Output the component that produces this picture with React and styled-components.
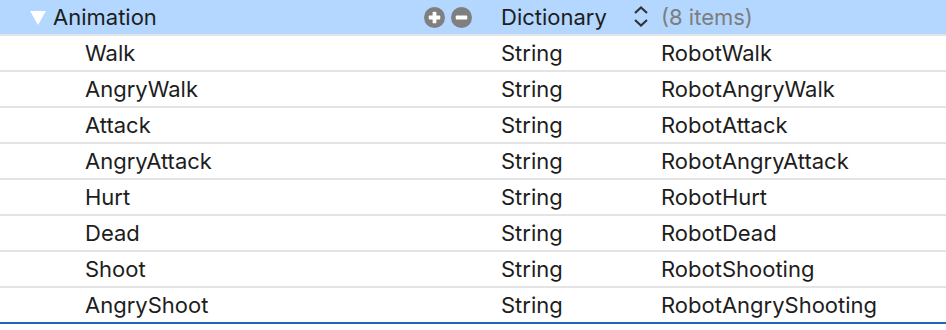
import React from "react";
import styled, { createGlobalStyle } from "styled-components";

const GlobalStyle = createGlobalStyle`
  body {
    margin: 0;
    background: #fff;
    font-family: Inter, "Liberation Sans", sans-serif;
  }
`;

const Table = styled.div`
  width: 946px;
  border-bottom: 2px solid #1f66b5;
`;

const Row = styled.div`
  display: grid;
  grid-template-columns: 501px 160px 1fr;
  height: 34px;
  align-items: center;
  background: ${(p) => (p.$selected ? "#b3d7ff" : "#fff")};
  border-top: ${(p) => (p.$first ? "none" : "2px solid #e4e4e4")};
  font-size: 22px;
  color: #1d1d1d;
`;

const KeyCell = styled.div`
  display: flex;
  align-items: center;
  height: 100%;
  padding-left: ${(p) => (p.$child ? "85px" : "30px")};
  padding-right: 29px;
`;

const Label = styled.span`
  flex: 1;
  white-space: nowrap;
`;

const Disclosure = styled.span`
  width: 0;
  height: 0;
  border-left: 8px solid transparent;
  border-right: 8px solid transparent;
  border-top: 14px solid #fff;
  margin-right: 7px;
  margin-top: 1px;
`;

const Buttons = styled.div`
  display: flex;
  gap: 6px;
`;

const TypeCell = styled.div`
  display: flex;
  align-items: center;
  padding-right: 12px;
`;

const Value = styled.div`
  white-space: nowrap;
  color: ${(p) => (p.$muted ? "#7d7d7d" : "#1d1d1d")};
`;

const RoundButton = ({ minus }) => (
  <svg width="21" height="21" viewBox="0 0 20 20">
    <circle cx="10" cy="10" r="10" fill="#7f7f7f" />
    <rect x="4.5" y="8.2" width="11" height="3.6" rx="0.8" fill="#fff" />
    {!minus && <rect x="8.2" y="4.5" width="3.6" height="11" rx="0.8" fill="#fff" />}
  </svg>
);

const Stepper = () => (
  <svg width="16" height="22" viewBox="0 0 16 22">
    <path d="M2 7 L8 1.5 L14 7" fill="none" stroke="#333" strokeWidth="2.2" />
    <path d="M2 14 L8 19.5 L14 14" fill="none" stroke="#333" strokeWidth="2.2" />
  </svg>
);

const items = [
  ["Walk", "RobotWalk"],
  ["AngryWalk", "RobotAngryWalk"],
  ["Attack", "RobotAttack"],
  ["AngryAttack", "RobotAngryAttack"],
  ["Hurt", "RobotHurt"],
  ["Dead", "RobotDead"],
  ["Shoot", "RobotShooting"],
  ["AngryShoot", "RobotAngryShooting"],
];

export default function App() {
  return (
    <>
      <GlobalStyle />
      <Table>
        <Row $selected $first>
          <KeyCell>
            <Disclosure />
            <Label>Animation</Label>
            <Buttons>
              <RoundButton />
              <RoundButton minus />
            </Buttons>
          </KeyCell>
          <TypeCell>
            <Label>Dictionary</Label>
            <Stepper />
          </TypeCell>
          <Value $muted>(8 items)</Value>
        </Row>
        {items.map(([key, value]) => (
          <Row key={key}>
            <KeyCell $child>
              <Label>{key}</Label>
            </KeyCell>
            <Value>String</Value>
            <Value>{value}</Value>
          </Row>
        ))}
      </Table>
    </>
  );
}
